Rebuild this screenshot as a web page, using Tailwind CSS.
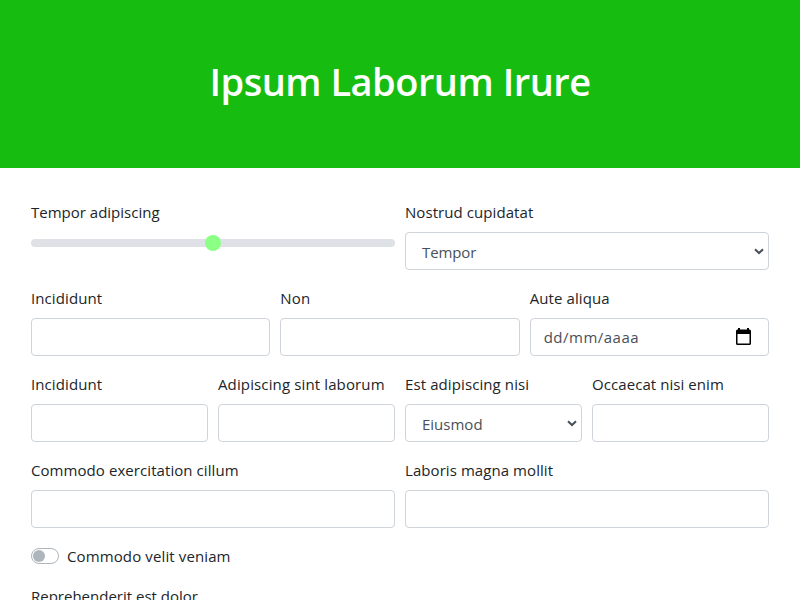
<!DOCTYPE html>
<html lang="en">
<head>
<meta charset="utf-8">
<title>Ipsum Laborum Irure</title>
<script src="https://cdn.jsdelivr.net/npm/@tailwindcss/browser@4"></script>
</head>
<body class="h-[600px] overflow-hidden bg-white font-['Open_Sans','Noto_Sans',sans-serif] text-[15px] leading-6 text-[#212529]">
<header class="flex h-[168px] items-center justify-center bg-[#16bd10] pb-1.5">
  <h1 class="whitespace-nowrap text-[38px] leading-[48px] font-semibold tracking-[-0.5px] text-white"><span>Ipsum Laborum Irure</span></h1>
</header>
<form class="flex flex-col gap-4 px-[31px] pt-8">
  <div class="grid grid-cols-2 gap-[10px]">
    <div class="flex flex-col gap-2">
      <label class="whitespace-nowrap"><span>Tempor adipiscing</span></label>
      <div class="flex h-[22px] items-center justify-center rounded-full">
        <div class="flex h-2 w-full items-center justify-center rounded-full bg-[#dee2e6]"><div class="size-4 shrink-0 rounded-full bg-[#8cff85]"></div></div>
      </div>
    </div>
    <div class="flex flex-col gap-2">
      <label class="whitespace-nowrap tracking-[0.07px]"><span>Nostrud cupidatat</span></label>
      <div class="flex h-[38px] items-center justify-between rounded border border-[#ced4da] pr-1 pl-4 text-[#495057]">
        <span class="pt-px tracking-[-0.1px]">Tempor</span>
        <svg class="h-[7px] w-[10px]" viewBox="0 0 10 7" fill="none" stroke="#495057" stroke-width="2"><path d="M1 1.2 5 5 9 1.2"/></svg>
      </div>
    </div>
  </div>
  <div class="grid grid-cols-3 gap-[10px]">
    <div class="flex flex-col gap-2"><label class="whitespace-nowrap tracking-[0.1px]"><span>Incididunt</span></label><input class="h-[38px] w-full rounded border border-[#ced4da]"></div>
    <div class="flex flex-col gap-2"><label class="whitespace-nowrap tracking-[0.2px]"><span>Non</span></label><input class="h-[38px] w-full rounded border border-[#ced4da]"></div>
    <div class="flex flex-col gap-2">
      <label class="whitespace-nowrap tracking-[0.1px]"><span>Aute aliqua</span></label>
      <div class="flex h-[38px] items-center justify-between rounded border border-[#ced4da] pr-[17px] pl-[13px] text-[#495057]">
        <span class="tracking-[0.5px]">dd/mm/aaaa</span>
        <svg class="mb-px h-[17px] w-[15px]" viewBox="0 0 15 17"><path fill="#000" fill-rule="evenodd" d="M2 0h2v1.5h7V0h2v1.5h.5A1.5 1.5 0 0 1 15 3v12.5a1.5 1.5 0 0 1-1.5 1.5h-12A1.5 1.5 0 0 1 0 15.500V3a1.500 1.500 0 0 1 1.500-1.500H2zM1.500 6v9.500h12V6z"/></svg>
      </div>
    </div>
  </div>
  <div class="grid grid-cols-4 gap-[10px]">
    <div class="flex flex-col gap-2"><label class="whitespace-nowrap tracking-[0.1px]"><span>Incididunt</span></label><input class="h-[38px] w-full rounded border border-[#ced4da]"></div>
    <div class="flex flex-col gap-2"><label class="whitespace-nowrap tracking-[0.13px]"><span>Adipiscing sint laborum</span></label><input class="h-[38px] w-full rounded border border-[#ced4da]"></div>
    <div class="flex flex-col gap-2">
      <label class="whitespace-nowrap tracking-[0.1px]"><span>Est adipiscing nisi</span></label>
      <div class="flex h-[38px] items-center justify-between rounded border border-[#ced4da] pr-1 pl-4 text-[#495057]">
        <span class="pt-px">Eiusmod</span>
        <svg class="h-[7px] w-[10px]" viewBox="0 0 10 7" fill="none" stroke="#495057" stroke-width="2"><path d="M1 1.2 5 5 9 1.2"/></svg>
      </div>
    </div>
    <div class="flex flex-col gap-2"><label class="whitespace-nowrap tracking-[0.07px]"><span>Occaecat nisi enim</span></label><input class="h-[38px] w-full rounded border border-[#ced4da]"></div>
  </div>
  <div class="grid grid-cols-2 gap-[10px]">
    <div class="flex flex-col gap-2"><label class="whitespace-nowrap tracking-[0.07px]"><span>Commodo exercitation cillum</span></label><input class="h-[38px] w-full rounded border border-[#ced4da]"></div>
    <div class="flex flex-col gap-2"><label class="whitespace-nowrap tracking-[0.07px]"><span>Laboris magna mollit</span></label><input class="h-[38px] w-full rounded border border-[#ced4da]"></div>
  </div>
  <div class="flex h-6 items-center gap-2">
    <div class="flex h-4 w-7 items-center rounded-full border border-[#adb5bd] pl-px"><div class="size-3 rounded-full bg-[#adb5bd]"></div></div>
    <label class="whitespace-nowrap tracking-[0.12px]"><span>Commodo velit veniam</span></label>
  </div>
  <label class="whitespace-nowrap"><span>Reprehenderit est dolor</span></label>
</form>
</body>
</html>
